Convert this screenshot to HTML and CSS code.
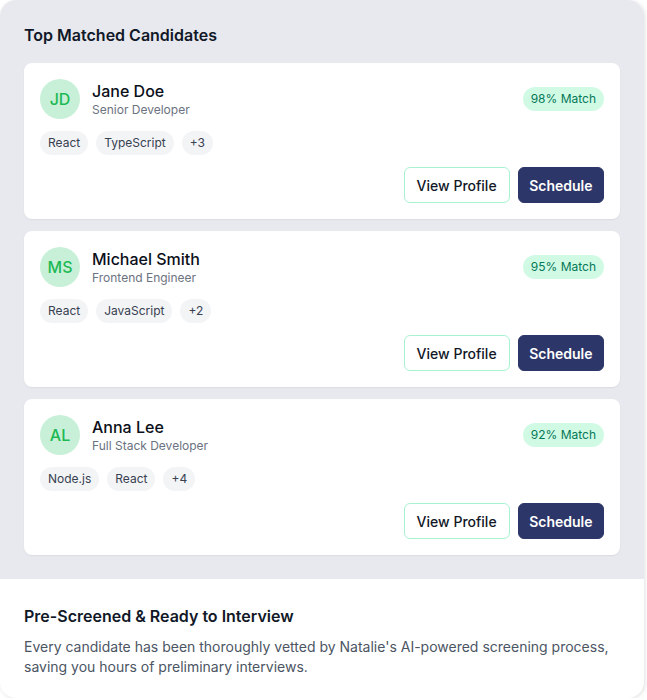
FILE: index.html
```html
<!DOCTYPE html>
<html lang="en">
<head>
  <meta charset="UTF-8">
  <meta name="viewport" content="width=device-width, initial-scale=1.0">
  <title>Top Matched Candidates</title>
  <link rel="stylesheet" href="styles.css">
</head>
<body>
  <div class="panel">
    <div class="matches">
      <h2 class="matches-title">Top Matched Candidates</h2>
      <div class="card-list">
        <div class="card">
          <div class="card-head">
            <div class="person">
              <div class="avatar">JD</div>
              <div>
                <div class="name">Jane Doe</div>
                <div class="role">Senior Developer</div>
              </div>
            </div>
            <span class="match">98% Match</span>
          </div>
          <div class="tags">
            <span class="tag">React</span>
            <span class="tag">TypeScript</span>
            <span class="tag">+3</span>
          </div>
          <div class="actions">
            <button class="btn btn-outline">View Profile</button>
            <button class="btn btn-primary">Schedule</button>
          </div>
        </div>

        <div class="card">
          <div class="card-head">
            <div class="person">
              <div class="avatar">MS</div>
              <div>
                <div class="name">Michael Smith</div>
                <div class="role">Frontend Engineer</div>
              </div>
            </div>
            <span class="match">95% Match</span>
          </div>
          <div class="tags">
            <span class="tag">React</span>
            <span class="tag">JavaScript</span>
            <span class="tag">+2</span>
          </div>
          <div class="actions">
            <button class="btn btn-outline">View Profile</button>
            <button class="btn btn-primary">Schedule</button>
          </div>
        </div>

        <div class="card">
          <div class="card-head">
            <div class="person">
              <div class="avatar">AL</div>
              <div>
                <div class="name">Anna Lee</div>
                <div class="role">Full Stack Developer</div>
              </div>
            </div>
            <span class="match">92% Match</span>
          </div>
          <div class="tags">
            <span class="tag">Node.js</span>
            <span class="tag">React</span>
            <span class="tag">+4</span>
          </div>
          <div class="actions">
            <button class="btn btn-outline">View Profile</button>
            <button class="btn btn-primary">Schedule</button>
          </div>
        </div>
      </div>
    </div>
    <div class="footer">
      <h3 class="footer-title">Pre-Screened &amp; Ready to Interview</h3>
      <p class="footer-text">Every candidate has been thoroughly vetted by Natalie's AI-powered screening process, saving you hours of preliminary interviews.</p>
    </div>
  </div>
</body>
</html>
```

FILE: styles.css
```css
* {
  padding: 0;
  margin: 0;
  box-sizing: border-box;
}
body {
  font-family: Inter, "Noto Sans", sans-serif;
  color: #111827;
  background-color: #fff;
}
.panel {
  width: 644px;
  height: 698px;
  border-radius: 16px;
  overflow: hidden;
  background-color: #fff;
  box-shadow: 1px 1px 4px rgba(0, 0, 0, 0.12);
}
.matches {
  background-color: #e8e9ee;
  padding: 24px 24px 24px;
}
.matches-title {
  font-size: 16px;
  font-weight: 600;
  line-height: 22px;
  margin-bottom: 17px;
}
.card-list {
  display: flex;
  flex-direction: column;
  gap: 12px;
  width: 596px;
}
.card {
  background-color: #fff;
  border-radius: 8px;
  padding: 16px;
  box-shadow: 0 1px 2px rgba(0, 0, 0, 0.06);
}
.card-head {
  display: flex;
  justify-content: space-between;
  align-items: center;
}
.person {
  display: flex;
  align-items: center;
  gap: 12px;
}
.avatar {
  width: 40px;
  height: 40px;
  border-radius: 50%;
  background-color: #c8f0d8;
  color: #1db954;
  font-size: 16px;
  font-weight: 500;
  display: flex;
  align-items: center;
  justify-content: center;
}
.name {
  font-size: 16px;
  font-weight: 500;
  line-height: 22px;
  color: #0b0f19;
}
.role {
  font-size: 12px;
  line-height: 16px;
  color: #6b7280;
}
.match {
  background-color: #d1fae5;
  color: #047857;
  font-size: 12px;
  line-height: 16px;
  padding: 4px 8px;
  border-radius: 999px;
}
.tags {
  display: flex;
  gap: 8px;
  margin-top: 12px;
}
.tag {
  background-color: #f3f4f6;
  color: #374151;
  font-size: 12px;
  line-height: 16px;
  padding: 4px 8px;
  border-radius: 999px;
}
.actions {
  display: flex;
  justify-content: flex-end;
  gap: 8px;
  margin-top: 12px;
}
.btn {
  font-family: Inter, "Noto Sans", sans-serif;
  font-size: 14px;
  height: 36px;
  padding: 0 12px;
  border-radius: 6px;
  cursor: pointer;
}
.btn-outline {
  background-color: #fff;
  color: #111827;
  border: 1px solid #a7f3d0;
  font-weight: 500;
}
.btn-primary {
  background-color: #2d3668;
  color: #fff;
  border: 1px solid #2d3668;
  font-weight: 600;
  padding: 0 10.5px;
}
.footer {
  padding: 26px 24px 24px;
}
.footer-title {
  font-size: 16px;
  font-weight: 600;
  line-height: 22px;
  margin-bottom: 10px;
}
.footer-text {
  font-size: 14px;
  line-height: 20px;
  color: #4b5563;
}
```
